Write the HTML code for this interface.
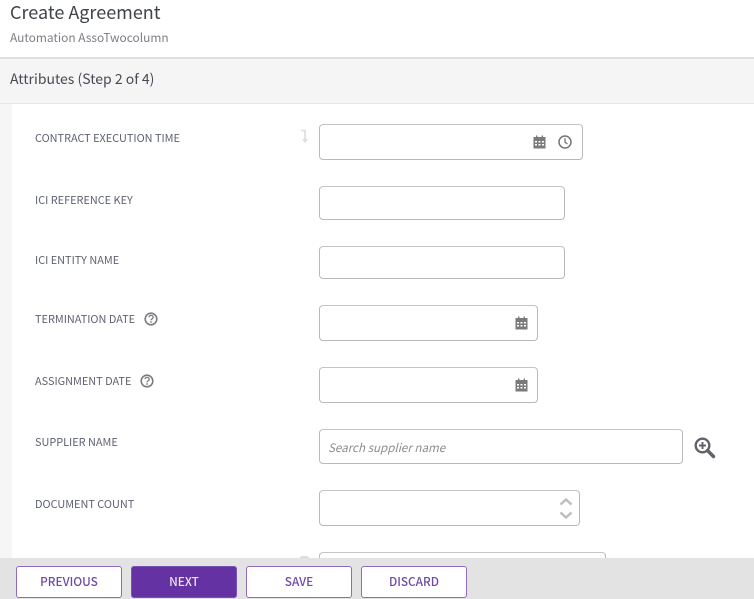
<!DOCTYPE html>
<html><head><meta charset="utf-8">
<style>
html,body{margin:0;padding:0;width:754px;height:599px;overflow:hidden;background:#fff;font-family:"Noto Sans CJK SC","Liberation Sans",sans-serif;}
div,svg{position:absolute;box-sizing:border-box}
.t{white-space:nowrap;line-height:16px}
.lbl{left:35px;font-size:10.9px;color:#5f6272;height:16px}
.inp{left:319px;border:1px solid #b9b9b9;border-radius:4px;background:#fff;border-top-color:#c4c4c4}
.btn{top:566px;height:32px;width:106px;border:1px solid #8e6bbf;border-radius:3px;background:#fff;color:#6f4aa8;font-size:11.8px;font-weight:500;text-align:center;line-height:29px}
</style></head><body>
<div class="t" style="left:10px;top:3px;font-size:18px;color:#3f434a;line-height:18px">Create Agreement</div>
<div class="t" style="left:10px;top:30px;font-size:11.9px;color:#7b7e85;">Automation AssoTwocolumn</div>
<div style="left:0;top:57px;width:754px;height:47px;background:#f5f5f5;border-top:2px solid #dedede;border-bottom:1px solid #e6e6e6"></div>
<div class="t" style="left:10px;top:71px;font-size:14px;color:#464a53;">Attributes (Step 2 of 4)</div>
<div style="left:0;top:104px;width:12px;height:455px;background:#f6f6f6"></div>

<div class="t lbl" style="top:130px">CONTRACT EXECUTION TIME</div>
<div class="t lbl" style="top:192px">ICI REFERENCE KEY</div>
<div class="t lbl" style="top:252px">ICI ENTITY NAME</div>
<div class="t lbl" style="top:311px">TERMINATION DATE</div>
<div class="t lbl" style="top:373px">ASSIGNMENT DATE</div>
<div class="t lbl" style="top:434px">SUPPLIER NAME</div>
<div class="t lbl" style="top:496px">DOCUMENT COUNT</div>

<svg style="left:144px;top:311px" width="15" height="16" viewBox="0 0 15 16"><circle cx="7" cy="8" r="5.8" fill="none" stroke="#7a7c81" stroke-width="1.600"/><path d="M5 6.300c0-2.600 4.200-2.600 4.200 0 0 1.700-2.200 1.500-2.200 3" fill="none" stroke="#7a7c81" stroke-width="1.300"/><circle cx="7" cy="11" r=".9" fill="#7a7c81"/></svg>
<svg style="left:140px;top:373px" width="15" height="16" viewBox="0 0 15 16"><circle cx="7" cy="8" r="5.8" fill="none" stroke="#7a7c81" stroke-width="1.600"/><path d="M5 6.300c0-2.600 4.200-2.600 4.200 0 0 1.700-2.200 1.500-2.200 3" fill="none" stroke="#7a7c81" stroke-width="1.300"/><circle cx="7" cy="11" r=".9" fill="#7a7c81"/></svg>

<svg style="left:300px;top:129px" width="10" height="15" viewBox="0 0 10 15"><path d="M1 1.500H5V11" fill="none" stroke="#dcdcdc" stroke-width="1.600"/><path d="M2 10H8L5 14Z" fill="#dcdcdc"/></svg>

<div class="inp" style="top:124px;width:264px;height:36px"></div>
<div class="inp" style="top:186px;width:246px;height:34px"></div>
<div class="inp" style="top:246px;width:246px;height:33px"></div>
<div class="inp" style="top:305px;width:219px;height:36px"></div>
<div class="inp" style="top:367px;width:219px;height:36px"></div>
<div class="inp" style="top:429px;width:364px;height:35px"></div>
<div class="inp" style="top:490px;width:261px;height:36px"></div>
<div class="inp" style="top:552px;width:287px;height:30px"></div>
<div style="left:299px;top:556px;width:11px;height:4px;background:#dcdcdc;border-radius:5px 5px 0 0"></div>

<svg style="left:533px;top:135px" width="13" height="14" viewBox="0 0 13 14"><path d="M3 0.500h1.400v2H3zM8.600 0.500H10v2H8.600z" fill="#7b7b7b"/><path fill-rule="evenodd" d="M.5 2h12v11.500H.5zM2 6v1.500h2V6zM5.500 6v1.500h2V6zM9 6v1.500h2V6zM2 9v1.500h2V9zM5.500 9v1.500h2V9zM9 9v1.500h2V9z" fill="#7b7b7b"/></svg>
<svg style="left:557px;top:134px" width="16" height="16" viewBox="0 0 16 16"><circle cx="8" cy="8" r="6" fill="none" stroke="#757575" stroke-width="1.500"/><path d="M8 4.200V8.300L10.500 10" fill="none" stroke="#757575" stroke-width="1.300"/></svg>
<svg style="left:515px;top:316px" width="13" height="14" viewBox="0 0 13 14"><path d="M3 0.500h1.400v2H3zM8.600 0.500H10v2H8.600z" fill="#7b7b7b"/><path fill-rule="evenodd" d="M.5 2h12v11.500H.5zM2 6v1.500h2V6zM5.500 6v1.500h2V6zM9 6v1.500h2V6zM2 9v1.500h2V9zM5.500 9v1.500h2V9zM9 9v1.500h2V9z" fill="#7b7b7b"/></svg>
<svg style="left:515px;top:378px" width="13" height="14" viewBox="0 0 13 14"><path d="M3 0.500h1.400v2H3zM8.600 0.500H10v2H8.600z" fill="#7b7b7b"/><path fill-rule="evenodd" d="M.5 2h12v11.500H.5zM2 6v1.500h2V6zM5.500 6v1.500h2V6zM9 6v1.500h2V6zM2 9v1.500h2V9zM5.500 9v1.500h2V9zM9 9v1.500h2V9z" fill="#7b7b7b"/></svg>

<div class="t" style="left:328px;top:440px;font-size:11.6px;font-style:italic;color:#8b8d92;">Search supplier name</div>
<svg style="left:693px;top:436px" width="24" height="24" viewBox="0 0 24 24"><circle cx="9.500" cy="9.500" r="6.800" fill="none" stroke="#5f6268" stroke-width="2.400"/><path d="M14.500 14.500L20.500 20.500" stroke="#5f6268" stroke-width="3.400" stroke-linecap="round"/><path d="M9.500 6V13M6 9.500H13" stroke="#5f6268" stroke-width="1.900"/></svg>
<svg style="left:558px;top:497px" width="16" height="24" viewBox="0 0 16 24"><path d="M2.500 7.500L8 2.500L13.500 7.500M2.500 15.500L8 20.500L13.500 15.500" fill="none" stroke="#bdbdbd" stroke-width="2.400"/></svg>

<div style="left:0;top:558px;width:754px;height:41px;background:#e3e3e3"></div>
<div class="btn" style="left:16px">PREVIOUS</div>
<div class="btn" style="left:131px;background:#6532a3;border-color:#7a52b2;color:#e9e2f3">NEXT</div>
<div class="btn" style="left:246px">SAVE</div>
<div class="btn" style="left:361px">DISCARD</div>
</body></html>
